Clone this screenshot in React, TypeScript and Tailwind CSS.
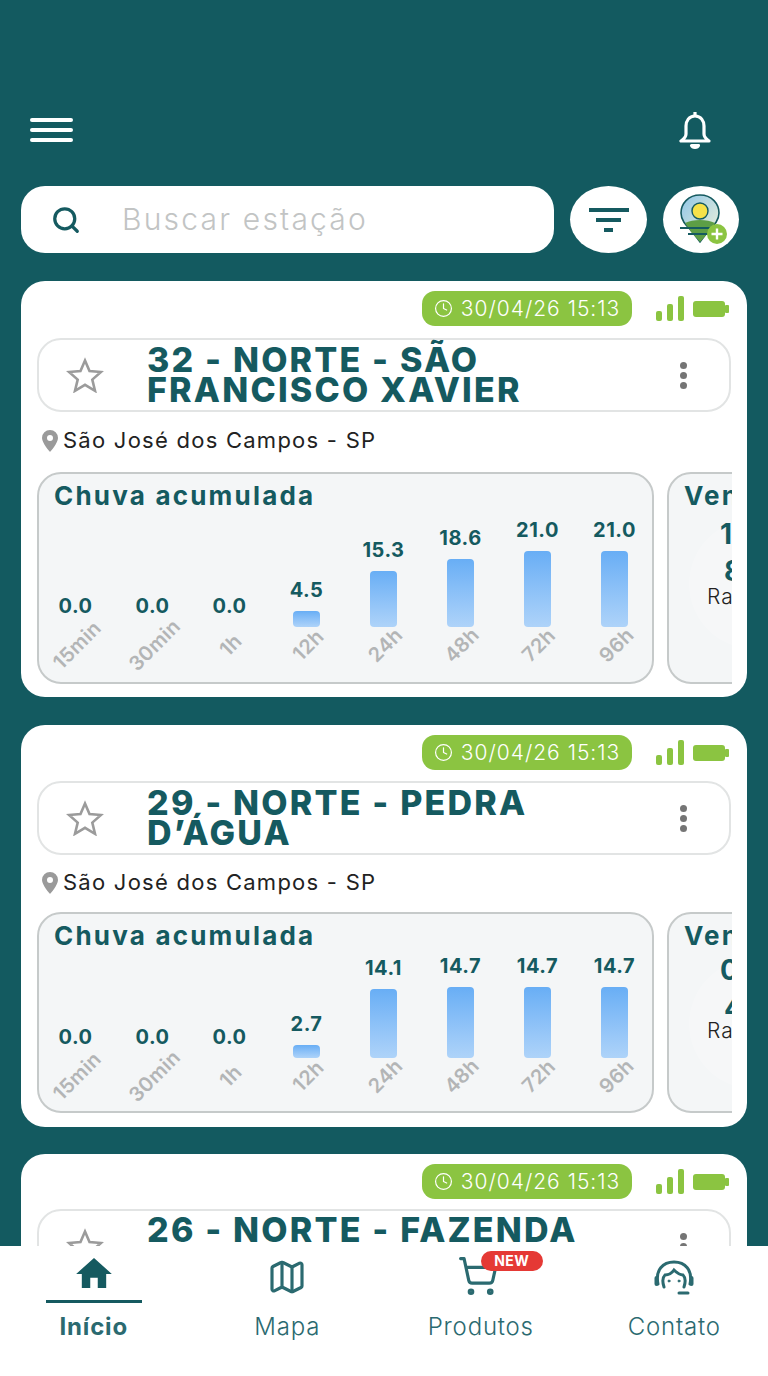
import { Map as MapIcon, Search, ShoppingCart, Clock } from 'lucide-react'

const stations = [
  {
    id: 32,
    title: ['32 - NORTE - SÃO', 'FRANCISCO XAVIER'],
    boxMt: 'mt-[12px]',
    panelH: 'h-[212px]',
    chartPb: 'pb-[19px]',
    locH: 'h-[60px] pb-[3px]',
    cardPb: 'pb-[13px] mb-[28px]',
    wind: ['1', '8'],
    windMt: ['mt-[12px]', 'mt-[13px]', 'mt-[3px]'],
    rows: [
      ['15min', 0, '0.0'],
      ['30min', 0, '0.0'],
      ['1h', 0, '0.0'],
      ['12h', 16, '4.5'],
      ['24h', 56, '15.3'],
      ['48h', 68, '18.6'],
      ['72h', 76, '21.0'],
      ['96h', 76, '21.0'],
    ] as [string, number, string][],
  },
  {
    id: 29,
    title: ['29 - NORTE - PEDRA', 'D’ÁGUA'],
    boxMt: 'mt-[11px]',
    panelH: 'h-[201px]',
    chartPb: 'pb-[17px]',
    locH: 'h-[57px] pb-[2px]',
    cardPb: 'pb-[14px] mb-[27px]',
    wind: ['0', '4'],
    windMt: ['mt-[8px]', 'mt-[14px]', 'mt-0'],
    rows: [
      ['15min', 0, '0.0'],
      ['30min', 0, '0.0'],
      ['1h', 0, '0.0'],
      ['12h', 13, '2.7'],
      ['24h', 69, '14.1'],
      ['48h', 71, '14.7'],
      ['72h', 71, '14.7'],
      ['96h', 71, '14.7'],
    ] as [string, number, string][],
  },
]

function Signal() {
  return (
    <svg width="28" height="26" viewBox="0 0 28 26" fill="#8bc441">
      <rect x="0" y="15" width="6" height="10" rx="2" />
      <rect x="11" y="8" width="6" height="17" rx="2" />
      <rect x="22" y="0" width="6" height="25" rx="2" />
    </svg>
  )
}

function Battery() {
  return (
    <svg width="36" height="16" viewBox="0 0 36 16" fill="#8bc441">
      <rect x="0" y="0" width="32" height="16" rx="3" />
      <rect x="32" y="4" width="4" height="8" rx="1" />
    </svg>
  )
}

function Dots() {
  return (
    <div className="flex flex-col gap-[3px]">
      <span className="w-[7px] h-[7px] rounded-full bg-[#757575]" />
      <span className="w-[7px] h-[7px] rounded-full bg-[#757575]" />
      <span className="w-[7px] h-[7px] rounded-full bg-[#757575]" />
    </div>
  )
}

function FavStar() {
  return (
    <svg className="ml-[27px] shrink-0" width="38" height="36" viewBox="0 0 38 36" fill="none" stroke="#9b9b9b" strokeWidth="2.6" strokeLinejoin="miter">
      <path d="M19 3.500 23.500 14 35 15 26.300 22.600 29 33.800 19 27.800 9 33.800 11.700 22.600 3 15 14.500 14z" />
    </svg>
  )
}

function StatusRow() {
  return (
    <div className="flex items-center justify-end pr-[18px] gap-[24px]">
      <div className="w-[210px] h-[35px] rounded-[13px] bg-[#8bc441] flex items-center justify-center gap-[8px] text-white text-[21px] tracking-[1px] font-light">
        <Clock className="w-[19px] h-[19px]" strokeWidth={1.5} />
        <span>30/04/26 15:13</span>
      </div>
      <div className="flex items-center gap-[9px]">
        <Signal />
        <Battery />
      </div>
    </div>
  )
}

function StationCard({ s }: { s: (typeof stations)[number] }) {
  return (
    <div className={`bg-white rounded-[24px] pt-[10px] ${s.cardPb}`}>
      <StatusRow />
      <div className={`${s.boxMt} mx-[16px] h-[74px] rounded-[24px] border-2 border-[#e2e4e4] flex items-center`}>
        <FavStar />
        <h2 className="ml-[43px] flex-1 text-[34px] leading-[30px] font-extrabold text-[#155a60] tracking-[2.2px] whitespace-nowrap">
          {s.title[0]}
          <br />
          {s.title[1]}
        </h2>
        <div className="mr-[42px]">
          <Dots />
        </div>
      </div>
      <div className={`${s.locH} mx-[20px] flex items-center gap-[4px] text-[22px] tracking-[1.25px] text-[#222]`}>
        <svg width="18" height="22" viewBox="0 0 18 22" fill="#9a9a9a">
          <path d="M9 0a8 8 0 0 0-8 8c0 5 8 14 8 14s8-9 8-14a8 8 0 0 0-8-8zm0 11a3 3 0 1 1 0-6 3 3 0 0 1 0 6z" />
        </svg>
        <span>São José dos Campos - SP</span>
      </div>
      <div className="ml-[16px] mr-[15px] flex overflow-hidden gap-[13px]">
        <div className={`${s.panelH} shrink-0 w-[617px] rounded-[24px] border-2 border-[#c6caca] bg-[#f4f6f7] flex flex-col ${s.chartPb}`}>
          <h3 className="mt-[8px] ml-[15px] text-[26px] leading-[28px] font-bold text-[#155a60] tracking-[2.2px] whitespace-nowrap">
            Chuva acumulada
          </h3>
          <div className="mt-auto grid grid-cols-8 w-[616px] -ml-[2px]">
            {s.rows.map(([label, h, value]) => (
              <div key={label} className="flex flex-col items-center justify-end">
                <span className="text-[20px] leading-[20px] tracking-[0.5px] font-bold text-[#155a60] mb-[11px]">{value}</span>
                {h > 0 && (
                  <div
                    className="w-[27px] rounded-[4px] bg-gradient-to-b from-[#68aef5] to-[#aed3f9]"
                    style={{ height: h }}
                  />
                )}
                <div className="h-[36px] pl-[3px] flex items-center justify-center">
                  <span className="-rotate-45 whitespace-nowrap text-[20px] tracking-[0.3px] font-semibold text-[#b3b5b6]">{label}</span>
                </div>
              </div>
            ))}
          </div>
        </div>
        <div className={`${s.panelH} relative overflow-hidden shrink-0 w-[170px] rounded-[24px] border-2 border-[#c6caca] bg-[#f4f6f7] flex flex-col`}>
          <div className="absolute top-[45px] left-[20px] w-[130px] h-[130px] rounded-full bg-white/20" />
          <h3 className="relative mt-[8px] ml-[15px] text-[26px] leading-[28px] font-bold text-[#155a60] tracking-[2.2px]">
            Vento
          </h3>
          <span className={`relative ${s.windMt[0]} ml-[51px] text-[28px] leading-[24px] font-bold text-[#155a60]`}>{s.wind[0]}</span>
          <span className={`relative ${s.windMt[1]} ml-[55px] text-[28px] leading-[24px] font-bold text-[#155a60]`}>{s.wind[1]}</span>
          <span className={`relative ${s.windMt[2]} ml-[38px] text-[21px] leading-[22px] tracking-[1px] font-light text-[#222]`}>Rajada</span>
        </div>
      </div>
    </div>
  )
}

function LastCard() {
  return (
    <div className="bg-white rounded-[24px] pt-[10px] pb-[13px]">
      <StatusRow />
      <div className="mt-[10px] mx-[16px] h-[74px] rounded-[24px] border-2 border-[#e2e4e4] flex items-center">
        <FavStar />
        <h2 className="self-start mt-[4px] ml-[43px] flex-1 text-[34px] leading-[30px] font-extrabold text-[#155a60] tracking-[2.2px] whitespace-nowrap">
          26 - NORTE - FAZENDA
        </h2>
        <div className="mr-[42px]">
          <Dots />
        </div>
      </div>
    </div>
  )
}

function NavItem({ label, active, children }: { label: string; active?: boolean; children: React.ReactNode }) {
  return (
    <div className="flex flex-col items-center">
      <div className="h-[54px] w-[96px] flex items-end justify-center relative">{children}</div>
      <div className={`w-[96px] h-[3px] ${active ? 'bg-[#155a60]' : ''}`} />
      <span className={`mt-[10px] text-[24px] leading-[28px] tracking-[0.8px] text-[#2b6a70] ${active ? 'font-bold' : 'font-light'}`}>
        {label}
      </span>
    </div>
  )
}

export default function App() {
  return (
    <div
      className="h-[1376px] w-[768px] overflow-hidden bg-[#135a60] flex flex-col"
      style={{ fontFamily: 'Inter, "Noto Sans", sans-serif' }}
    >
      <header className="pt-[112px] pl-[30px] pr-[57px] flex items-start justify-between h-[186px] shrink-0">
        <div className="mt-[6px] w-[43px] flex flex-col gap-[6px]">
          <span className="h-[4px] rounded-full bg-white" />
          <span className="h-[4px] rounded-full bg-white" />
          <span className="h-[4px] rounded-full bg-white" />
        </div>
        <svg width="32" height="37" viewBox="0 0 32 37" fill="none" stroke="white" strokeWidth="3.2" strokeLinejoin="round">
          <path d="M16 4c-6 0-9 5-9 10v8c0 3-2 5-5 7h28c-3-2-5-4-5-7v-8c0-5-3-10-9-10z" />
          <path d="M16 0v3" />
          <path d="M12.500 33.500c1 2.500 6 2.500 7 0z" fill="white" />
        </svg>
      </header>

      <div className="h-[67px] shrink-0 pl-[21px] flex items-stretch">
        <div className="w-[533px] rounded-[24px] bg-white flex items-center">
          <Search className="ml-[30px] w-[30px] h-[30px] text-[#155a60]" strokeWidth={2.6} />
          <span className="ml-[41px] text-[30px] tracking-[2.2px] font-light text-[#c2c4c4]">Buscar estação</span>
        </div>
        <div className="ml-[16px] w-[77px] rounded-[50%] bg-white flex flex-col items-center justify-center gap-[6px]">
          <span className="w-[40px] h-[4px] bg-[#155a60]" />
          <span className="w-[25px] h-[4px] bg-[#155a60]" />
          <span className="w-[9px] h-[4px] bg-[#155a60]" />
        </div>
        <div className="ml-[16px] w-[76px] rounded-[50%] bg-white flex items-center justify-center">
          <svg className="ml-[6px]" width="56" height="56" viewBox="0 0 56 56">
            <defs>
              <linearGradient id="sky" x1="0" y1="0" x2="1" y2="1">
                <stop offset="0" stopColor="#8fc6e8" />
                <stop offset="1" stopColor="#f4f4d8" />
              </linearGradient>
            </defs>
            <path d="M24 3C12 3 5 12 5 21c0 8 6 13 10 17l9 12 9-12c4-4 10-9 10-17C43 12 36 3 24 3z" fill="url(#sky)" stroke="#155a60" strokeWidth="1.6" />
            <circle cx="24" cy="19" r="8" fill="#f6e14a" stroke="#155a60" strokeWidth="1.4" />
            <path d="M9 31c8-4 22-4 30 0l-6 9-9 10-9-10z" fill="#5d9e46" />
            <path d="M4 36h32M12 42h22" stroke="#155a60" strokeWidth="2" />
            <circle cx="41" cy="42" r="10" fill="#8bc441" />
            <path d="M41 36.500v11M35.500 42h11" stroke="white" strokeWidth="2.400" />
          </svg>
        </div>
      </div>

      <main className="flex-1 min-h-0 overflow-hidden mt-[28px] pl-[21px] pr-[21px]">
        {stations.map((s) => (
          <StationCard key={s.id} s={s} />
        ))}
        <LastCard />
      </main>

      <nav className="h-[130px] shrink-0 bg-white -mx-[3px] grid grid-cols-4">
        <NavItem label="Início" active>
          <svg className="mb-[12px]" width="38" height="30" viewBox="0 0 38 32" fill="#155a60">
            <path d="M19 0 0 17h6v15h9V21h8v11h9V17h6z" />
          </svg>
        </NavItem>
        <NavItem label="Mapa">
          <MapIcon className="mb-[3px] w-[40px] h-[40px] text-[#2b6a70]" strokeWidth={1.9} />
        </NavItem>
        <NavItem label="Produtos">
          <ShoppingCart className="mb-[3px] -ml-[6px] w-[42px] h-[42px] text-[#2b6a70]" strokeWidth={1.8} />
          <span className="absolute top-[5px] left-[48px] w-[62px] h-[20px] rounded-full bg-[#e53935] text-white text-[14px] leading-[20px] font-bold text-center tracking-[0.5px]">
            NEW
          </span>
        </NavItem>
        <NavItem label="Contato">
          <svg className="mb-[5px]" width="40" height="35" viewBox="0 0 40 35" fill="none" stroke="#2b6a70" strokeWidth="3" strokeLinecap="round">
            <path d="M4 24C1 10 9 2 20 2s19 8 16 22" />
            <path d="M10 27c-2-6-1-10 1-12 4 0 7-2 9-5 3 3 6 5 9 5 2 2 3 6 1 12" />
            <path d="M2.500 18v6M37.500 18v6" strokeWidth="4" />
            <path d="M25 33h9" />
            <circle cx="15" cy="21" r="1" fill="#2b6a70" strokeWidth="1" />
            <circle cx="25" cy="21" r="1" fill="#2b6a70" strokeWidth="1" />
          </svg>
        </NavItem>
      </nav>
    </div>
  )
}
